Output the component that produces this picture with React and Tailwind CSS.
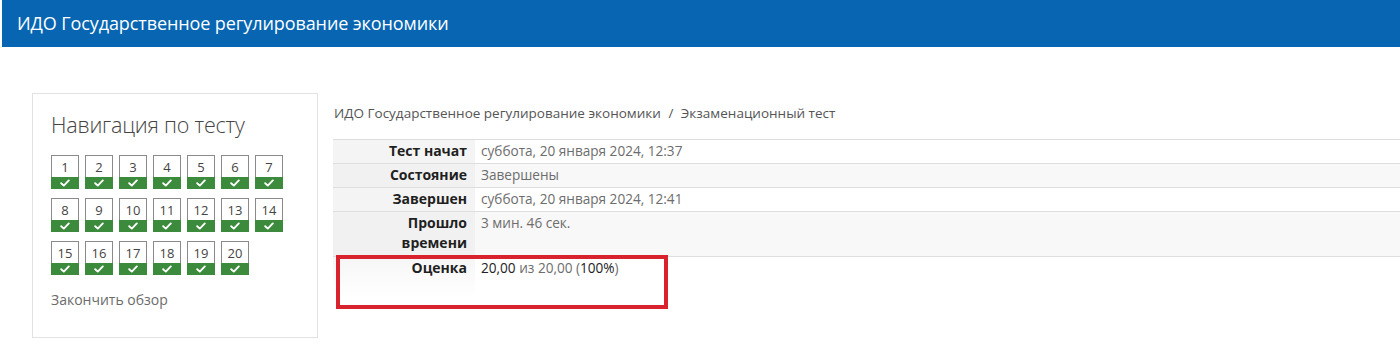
import React from "react";

const Check = () => (
  <svg width="10" height="8" viewBox="0 0 10 8" fill="none">
    <path d="M1.2 4.2 L3.8 6.6 L8.8 1.4" stroke="white" strokeWidth="1.9" strokeLinecap="round" strokeLinejoin="round" />
  </svg>
);

const NavButton = ({ n }) => (
  <div className="flex flex-col w-[28px] h-[34px]">
    <div className="flex-1 border border-b-0 border-[#8a8a8a] bg-white flex items-center justify-center text-[13px] leading-none text-[#444] pt-[1px]">
      {n}
    </div>
    <div className="h-[12px] bg-[#3c8a3c] flex items-center justify-center">
      <Check />
    </div>
  </div>
);

const rows = [
  { label: "Тест начат", value: "суббота, 20 января 2024, 12:37", stripe: false },
  { label: "Состояние", value: "Завершены", stripe: true },
  { label: "Завершен", value: "суббота, 20 января 2024, 12:41", stripe: false },
  { label: ["Прошло", "времени"], value: "3 мин. 46 сек.", stripe: true },
];

export default function App() {
  const nums = Array.from({ length: 20 }, (_, i) => i + 1);
  return (
    <div className="w-[1400px] h-[357px] bg-white overflow-hidden" style={{ fontFamily: '"Open Sans", "Noto Sans", sans-serif' }}>
      <div className="pl-[2px]">
        <div className="h-[47px] bg-[#0765b2] flex items-center pl-[15px]">
          <span className="text-white text-[18px] tracking-[-0.1px]">ИДО Государственное регулирование экономики</span>
        </div>
      </div>
      <div className="flex pt-[46px] pl-[32px]">
        <div className="w-[286px] h-[245px] border border-[#e2e2e2] pl-[18px] pt-[17px]">
          <div className="text-[21.5px] font-light text-[#444] leading-[28px] tracking-[-0.2px]">Навигация по тесту</div>
          <div className="grid grid-cols-[repeat(7,28px)] gap-x-[6px] gap-y-[9px] mt-[16px]">
            {nums.map((n) => (
              <NavButton key={n} n={n} />
            ))}
          </div>
          <div className="mt-[14px] text-[14px] text-[#6b6b6b]">Закончить обзор</div>
        </div>
        <div className="flex-1 ml-[15px]">
          <div className="pt-[10px] pl-[1px] text-[13.5px] text-[#555] leading-[20px]">
            ИДО Государственное регулирование экономики <span className="mx-[4px]">/</span> Экзаменационный тест
          </div>
          <div className="relative mt-[16px] text-[13.6px]">
            {rows.map((r, i) => (
              <div key={i} className={`flex border-t border-[#dedede] ${r.stripe ? "bg-[#f8f8f8]" : "bg-white"}`}>
                <div className={`w-[142px] shrink-0 text-right pr-[8px] pt-[1px] ${i === 3 ? "pb-[3px]" : "pb-[2px]"} leading-[20px] text-[14px] font-bold text-[#1f1f1f] ${r.stripe ? "bg-[#f1f1f1]" : "bg-[#f4f4f4]"}`}>
                  {Array.isArray(r.label) ? (
                    <>
                      {r.label[0]}
                      <br />
                      {r.label[1]}
                    </>
                  ) : (
                    r.label
                  )}
                </div>
                <div className="pl-[6px] pt-[1px] pb-[2px] leading-[20px] text-[#6d6d6d]">{r.value}</div>
              </div>
            ))}
            <div className="flex border-t border-[#dedede] bg-white h-[42px]">
              <div className="w-[142px] shrink-0 text-right pr-[8px] pt-[1px] leading-[20px] text-[14px] font-bold text-[#1f1f1f] bg-gradient-to-b from-[#f6f6f6] to-white">
                Оценка
              </div>
              <div className="pl-[6px] pt-[1px] leading-[20px] text-[#6d6d6d]">
                <span className="text-[#222]">20,00</span> из 20,00 (<span className="text-[#222]">100%</span>)
              </div>
            </div>
            <div className="absolute left-[3px] top-[116px] w-[332px] h-[54px] border-[4px] border-[#d8232f] pointer-events-none" />
          </div>
        </div>
      </div>
    </div>
  );
}
